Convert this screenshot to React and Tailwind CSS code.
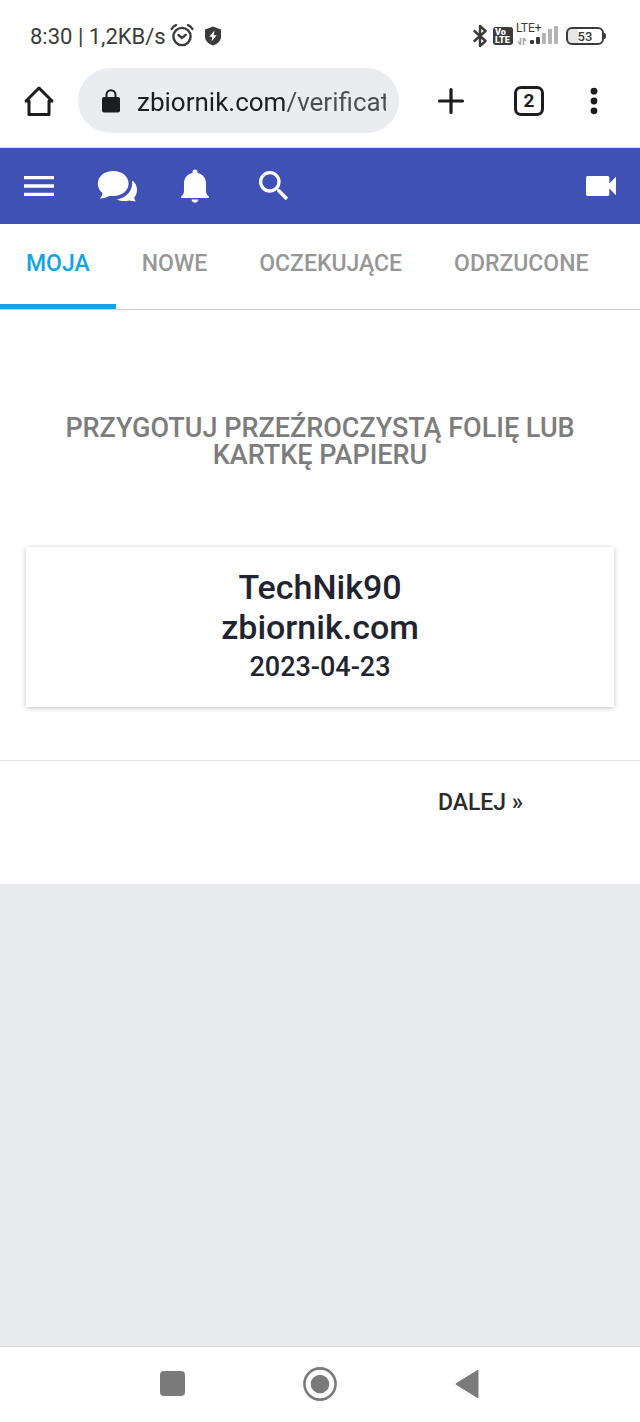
import { MdMenu, MdSearch, MdVideocam } from 'react-icons/md';

const tabs = [
  { label: 'MOJA', active: true },
  { label: 'NOWE' },
  { label: 'OCZEKUJĄCE' },
  { label: 'ODRZUCONE' },
];

const signalBars = [
  { x: 14, height: 4, on: true },
  { x: 20, height: 7, on: true },
  { x: 26, height: 11 },
  { x: 32, height: 15 },
  { x: 38, height: 18 },
];

function AlarmIcon() {
  return (
    <svg width="24" height="24" viewBox="0 0 24 24" fill="none" stroke="currentColor" strokeWidth="2.400" strokeLinecap="round">
      <circle cx="12" cy="12.500" r="8.600" />
      <path d="M8.500 11l3.400 3 3.800-3.200M1.600 5C2.600 3.300 4.200 1.900 6 1.200M22.400 5C21.400 3.300 19.800 1.900 18 1.200" />
    </svg>
  );
}

function ShieldIcon() {
  return (
    <svg width="18" height="20" viewBox="0 0 18 20">
      <path d="M9 .5l8 3v7c0 4.300-3.200 7.100-8 9-4.800-1.900-8-4.700-8-9v-7z" fill="currentColor" />
      <path d="M10.500 4.500L5.300 10.700h3L7.500 15.500l5.200-6.300h-3z" fill="white" />
    </svg>
  );
}

function BluetoothIcon() {
  return (
    <svg width="16" height="24" viewBox="0 0 16 24" fill="none" stroke="currentColor" strokeWidth="2.400" strokeLinejoin="round">
      <path d="M1.800 6.500L13.600 17 8 22V2l5.600 5L1.800 17.500" />
    </svg>
  );
}

function HomeIcon() {
  return (
    <svg width="32" height="32" viewBox="0 0 32 32" fill="none" stroke="currentColor" strokeWidth="3" strokeLinejoin="round">
      <path d="M2.500 16.500L16 3l13.500 13.500M1.800 16H6v13.500h20V16h4.200" />
    </svg>
  );
}

function LockIcon() {
  return (
    <svg className="shrink-0" width="18" height="24" viewBox="0 0 18 24">
      <rect x="0" y="8" width="18" height="15.500" rx="2" fill="currentColor" />
      <path d="M4.500 9V5.700a4.500 4.500 0 0 1 9 0V9" fill="none" stroke="currentColor" strokeWidth="2" />
    </svg>
  );
}

function PlusIcon() {
  return (
    <svg width="28" height="28" viewBox="0 0 28 28" stroke="currentColor" strokeWidth="3.200" strokeLinecap="round">
      <path d="M14 2.500v23M2.500 14h23" />
    </svg>
  );
}

function DotsIcon() {
  return (
    <svg width="8" height="28" viewBox="0 0 8 28" fill="currentColor">
      <circle cx="4" cy="4.200" r="3.400" />
      <circle cx="4" cy="14" r="3.400" />
      <circle cx="4" cy="23.800" r="3.400" />
    </svg>
  );
}

function ChatIcon() {
  return (
    <svg width="40" height="32" viewBox="0 0 40 32" fill="currentColor">
      <path d="M16.200 1C7.600 1 .8 6.500.8 13.400c0 4.400 2 7.400 4.700 9.600-.1 2-1 3.600-2.500 5.400 3.400 0 6.800-1 9.400-2.700 1.300.2 2.500.3 3.800.3 8.600 0 15.400-5.600 15.400-12.600S24.800 1 16.200 1z" />
      <path d="M35.200 10.500c3 2.200 4.800 5.400 4.800 9.200 0 3.100-1 5.700-2.800 7.800.1 1.300.6 2.400 1.500 3.700-2.500 0-4.500-.4-6.500-.8-4.400.8-8.600.8-12.200-1C29.500 27.800 36 21 35.200 10.500z" />
    </svg>
  );
}

function BellIcon() {
  return (
    <svg width="28" height="34" viewBox="0 0 28 34" fill="currentColor">
      <path d="M11.500 3a2.500 2.500 0 0 1 5 0v1c5 1.200 8.500 5 8.500 10v7.500c0 3 .8 4.100 2.800 6.100V29H.2v-1.400C2.200 25.600 3 24.500 3 21.500V14C3 9 6.500 5.200 11.500 4z" />
      <path d="M10.500 30.500h7c-.3 2-1.700 3.200-3.500 3.200s-3.200-1.200-3.500-3.200z" />
    </svg>
  );
}

function Signal() {
  return (
    <div className="relative h-6 w-[42px]">
      <svg width="42" height="24" viewBox="0 0 42 24">
        <path d="M4.500 14v7M2 17.500l2.500 3M7.500 21v-7M7.500 14l2.500 3" stroke="#a5a5a5" strokeWidth="1.500" fill="none" />
        {signalBars.map(({ x, height, on }) => (
          <rect key={x} x={x} y={20 - height} width="4" height={height} rx="1" fill={on ? '#3b3b3b' : '#b3b3b3'} />
        ))}
      </svg>
      <span className="absolute left-0 -top-0.5 text-[12px] leading-3">LTE+</span>
    </div>
  );
}

function StatusBar() {
  return (
    <div className="flex h-[68px] items-center justify-between pl-[30px] pr-[34px] pt-1.5 text-[#3b3b3b]">
      <div className="flex items-center">
        <span className="text-[22px] leading-6">8:30 | 1,2KB/s</span>
        <span className="ml-1 flex items-center gap-2.5 pb-0.5">
          <AlarmIcon />
          <ShieldIcon />
        </span>
      </div>
      <div className="flex items-center pb-0.5">
        <BluetoothIcon />
        <div className="ml-[5px] mr-[3px] flex h-[18px] w-5 flex-col justify-center rounded-[3px] bg-[#3b3b3b] pl-0.5 text-[9px] font-black leading-[8px] text-white">
          <span>Vo</span>
          <span>LTE</span>
        </div>
        <Signal />
        <div className="ml-2 flex items-center">
          <div className="flex h-[18px] w-[38px] items-center justify-center rounded-[6px] border-2 border-current bg-linear-to-r from-[#e6e6e6] from-30% to-white to-30% bg-no-repeat text-[13px] font-medium leading-none">
            53
          </div>
          <div className="h-1.5 w-0.5 rounded-r-xs bg-current" />
        </div>
      </div>
    </div>
  );
}

function BrowserBar() {
  return (
    <div className="flex items-center border-b border-[#d9dbe6] pb-3.5 pr-5 text-[#1d1d1f]">
      <button aria-label="Strona główna" className="flex w-[78px] justify-center">
        <HomeIcon />
      </button>
      <label className="flex h-[65px] min-w-0 flex-1 items-center gap-[17px] rounded-full bg-[#ebecf0] pl-6 pr-[13px]">
        <LockIcon />
        <input
          type="text"
          aria-label="Adres"
          defaultValue="zbiornik.com/verificat"
          className="w-full min-w-0 bg-linear-to-r from-[#1d1d1f] from-[150px] to-[#4c4d50] to-[150px] bg-clip-text pt-0.5 text-[26px] leading-8 text-transparent outline-none"
        />
      </label>
      <button aria-label="Nowa karta" className="ml-[13px] flex w-[78px] justify-center">
        <PlusIcon />
      </button>
      <button aria-label="Karty" className="flex w-[78px] justify-center">
        <span className="flex size-[30px] items-center justify-center rounded-[7px] border-3 border-current text-[19px] font-bold leading-none">
          2
        </span>
      </button>
      <button aria-label="Menu przeglądarki" className="flex w-[52px] justify-center">
        <DotsIcon />
      </button>
    </div>
  );
}

function AppHeader() {
  return (
    <header className="flex h-[76px] items-center bg-[#3f51b5] text-white">
      <button aria-label="Menu" className="flex w-[78px] justify-center">
        <MdMenu size={40} />
      </button>
      <button aria-label="Wiadomości" className="flex w-[78px] justify-center">
        <ChatIcon />
      </button>
      <button aria-label="Powiadomienia" className="flex w-[78px] justify-center">
        <BellIcon />
      </button>
      <button aria-label="Szukaj" className="flex w-20 justify-center">
        <MdSearch size={40} />
      </button>
      <button aria-label="Kamera" className="ml-auto flex w-[78px] justify-center">
        <MdVideocam size={40} />
      </button>
    </header>
  );
}

function Tabs() {
  return (
    <nav className="flex h-[86px] border-b border-[#cfcfcf] text-[23px] font-medium leading-7">
      {tabs.map(({ label, active }) => (
        <a
          key={label}
          href="#"
          className={`border-b-5 px-[26px] pt-[26px] ${
            active ? 'border-[#12a3e6] text-[#12a3e6]' : 'border-transparent text-[#979797]'
          }`}
        >
          {label}
        </a>
      ))}
    </nav>
  );
}

function SystemNav() {
  return (
    <nav className="flex h-[76px] items-center justify-center border-t border-[#dedede] bg-white pb-0.5 text-[#7a7a7a]">
      <button aria-label="Ostatnie" className="flex w-[23%] justify-center">
        <span className="size-[25px] rounded bg-current" />
      </button>
      <button aria-label="Ekran główny" className="flex w-[23%] justify-center">
        <svg width="34" height="34" viewBox="0 0 34 34">
          <circle cx="17" cy="17" r="15.600" fill="none" stroke="currentColor" strokeWidth="2.600" />
          <circle cx="17" cy="17" r="9.300" fill="currentColor" />
        </svg>
      </button>
      <button aria-label="Wstecz" className="flex w-[23%] justify-center">
        <svg width="24" height="30" viewBox="0 0 24 30" fill="currentColor" stroke="currentColor" strokeWidth="2" strokeLinejoin="round">
          <path d="M22.500 2v26L1.500 15z" />
        </svg>
      </button>
    </nav>
  );
}

export default function App() {
  return (
    <div className="flex min-h-screen flex-col bg-[#e8e9ed] font-[Roboto,sans-serif]">
      <div className="bg-white">
        <StatusBar />
        <BrowserBar />
      </div>
      <AppHeader />

      <main className="flex-1">
        <div className="bg-white">
          <Tabs />

          <section className="px-[26px] pb-[53px] pt-[105px] text-center font-medium">
            <h1 className="text-[27px] leading-[27px] text-[#7d7d7d]">
              PRZYGOTUJ PRZEŹROCZYSTĄ FOLIĘ LUB KARTKĘ PAPIERU
            </h1>
            <div className="mt-[78px] pb-5 pt-5 text-[#1f2430] shadow-[0_1px_5px_rgba(0,0,0,0.25)]">
              <p className="text-[34px] leading-10">TechNik90</p>
              <p className="text-[34px] leading-10">zbiornik.com</p>
              <p className="text-[27px] leading-10">2023-04-23</p>
            </div>
          </section>

          <div className="flex h-[124px] justify-end border-t border-[#e6e6e6] pr-[117px] pt-7">
            <button className="self-start text-[23px] font-medium leading-7 text-[#2b2b2b]">DALEJ »</button>
          </div>
        </div>
      </main>

      <SystemNav />
    </div>
  );
}
